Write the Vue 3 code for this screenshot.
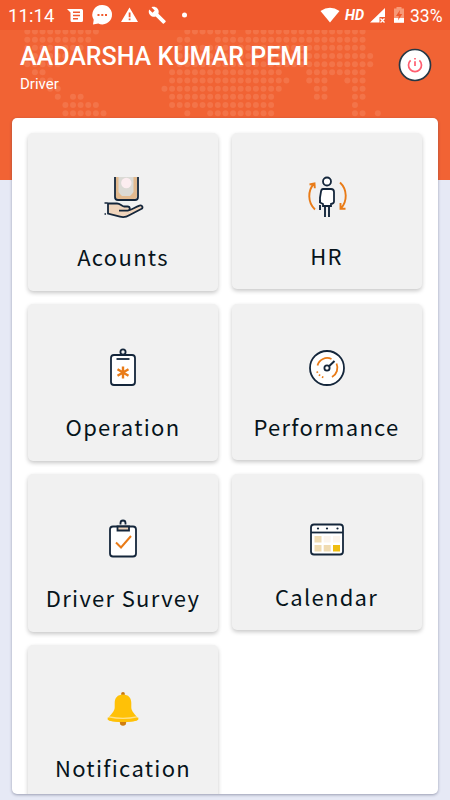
<template>
  <div class="screen">
    <header class="header">
      <svg class="dots" width="450" height="180" viewBox="0 0 450 180">
        <circle v-for="d in dots" :key="d.id" :cx="d.x" :cy="d.y" r="3" />
      </svg>
      <div class="status">
        <span class="time">11:14</span>
        <svg class="status-left" width="124" height="30" viewBox="66 0 124 30" fill="#fff">
          <path fill-rule="evenodd" d="M67 9h14.500q1.500 0 1.500 1.500v10q0 1.500-1.500 1.500H72q-1.500 0-1.500-1.500V12.500zM73 11.500v1.500h7v-1.500zM73 14.700v1.500h7v-1.500zM73 18v1.500h5v-1.500z" />
          <path fill-rule="evenodd" d="M102 5a9.700 9.700 0 1 1-3.700 18.500L93 24.500l.7-4.800A9.700 9.700 0 0 1 102 5zM97.500 14v2h2v-2zM101.300 14v2h2v-2zM105 14v2h2v-2z" />
          <path fill-rule="evenodd" d="M129.500 7.500L138 22h-17zM128.700 12.500v4.800h1.800v-4.800zM128.700 18.500v1.800h1.800v-1.800z" />
          <path d="M165.500 20.800l-7.100-7.100c.7-1.800.3-3.900-1.200-5.400-1.500-1.500-3.800-1.900-5.700-1l3.200 3.200-2.200 2.200-3.300-3.200c-.9 1.900-.5 4.300 1.100 5.800 1.500 1.500 3.600 1.900 5.400 1.200l7.100 7.100c.3.300.8.300 1.100 0l1.600-1.700c.4-.3.400-.8 0-1.100z" />
          <circle cx="184.500" cy="15" r="2.500" />
        </svg>
        <svg class="status-wifi" width="22" height="30" viewBox="0 0 22 30" fill="#fff"><path d="M.5 11Q10 4.300 19.500 11L10 22.500z" /></svg>
        <span class="hd">HD</span>
        <svg class="status-signal" width="36" height="30" viewBox="369 0 36 30" fill="#fff">
          <path d="M385 8v9h-5.500v5.500H370z" />
          <path d="M380.500 18.500l4 4M384.500 18.500l-4 4" fill="none" stroke="#fff" stroke-width="1.300" />
          <path fill="#f79a78" d="M396.500 7h5v1.500h2.500V19h-10V8.500h2.500z" />
          <path d="M394 18h10v4.800h-10z" />
          <path fill="#f05a2d" d="M400 10l-4 6h2.800l-.8 4.500 4.200-6.500h-2.700z" />
        </svg>
        <span class="battery">33%</span>
      </div>
      <div class="profile">
        <div class="who">
          <h1>AADARSHA KUMAR PEMI</h1>
          <p>Driver</p>
        </div>
        <button class="power">
          <svg width="34" height="34" viewBox="0 0 34 34" fill="none">
            <circle cx="17" cy="17" r="15.500" fill="#fff" stroke="#263846" stroke-width="1.700" />
            <path d="M12.600 12.300a6.500 6.500 0 1 0 8.800 0" stroke="#ff5e70" stroke-width="1.700" />
            <path d="M17 13.200v4.800M17 10v1.600" stroke="#ff5e70" stroke-width="1.700" />
          </svg>
        </button>
      </div>
    </header>

    <main class="panel">
      <div class="grid">
        <div v-for="(c, i) in cards" :key="c.label" class="card" :class="{ short: i % 2 }">
          <svg class="icon" width="50" height="50" viewBox="0 0 50 50" fill="none" stroke="#14263b" stroke-width="1.800">
            <g v-if="c.icon === 'accounts'">
              <path fill="#e3ba8f" stroke="none" d="M17 4h22v19q0 3-3 3H20q-3 0-3-3z" />
              <path fill="#dbdad5" stroke="none" d="M20.500 4h15v15l-1.500 2-2 2h-8l-2-2-1.500-2z" />
              <circle cx="28.300" cy="10" r="5.200" fill="#fcedf0" stroke="none" />
              <path d="M17 4v20q0 3 3 3h17q3 0 3-3V4" />
              <path fill="#f0d5bd" d="M10 30.500h9c3 0 4 2 7 3h3.500c3 0 3 4 0 4.200H21h8.500c3-.2 7-3.200 12-5.100 3-.8 4 2.200 1.700 3.400l-12 6.300c-3 1.900-6 2.200-9.200 1.400L10 40.500z" />
              <path d="M6.500 30h3M6.500 41h1.500" stroke-width="1.600" />
            </g>
            <g v-else-if="c.icon === 'hr'">
              <circle cx="25" cy="9.500" r="4" fill="#fff" />
              <path fill="#fff" d="M21 17h8q3 0 3 3v9.500q0 2-3 2.500v2h-8v-2l-3-1.500v-5l1-6q.5-2.500 2-2.500z" />
              <path d="M23 34v11M27 34v11M18 28v3M18 33v5" stroke-width="1.900" />
              <path d="M13 37.500c-7.500-7-7.500-19-.8-26M7.500 12.500l5-1 .3 4.800M38 10.500c7.500 7 7.500 19 .8 26M38.500 31v5.800h5" stroke="#e97b17" stroke-width="1.900" />
            </g>
            <g v-else-if="c.icon === 'operation'">
              <circle cx="25" cy="9" r="2.600" />
              <rect x="13" y="12" width="24" height="30" rx="3" fill="#fff" />
              <path d="M18.500 16H31.500" />
              <path d="M25 23.500V35.500M19.500 26.300L30.500 32.700M30.500 26.300L19.500 32.700" stroke="#e97b17" stroke-width="2.400" />
            </g>
            <g v-else-if="c.icon === 'performance'">
              <circle cx="25" cy="25" r="17" fill="#fff" />
              <path d="M15.500 22.500A10 10 0 0 1 29.500 16M34.500 20.500A10.500 10.500 0 0 1 30 34" stroke="#e97b17" />
              <path d="M15 28.500A10.500 10.500 0 0 0 21.500 34.500" stroke="#e97b17" stroke-dasharray="1.500 2.200" />
              <circle cx="25" cy="25" r="2.600" />
              <path d="M27 23.200L32.500 18" stroke-width="2" />
            </g>
            <g v-else-if="c.icon === 'survey'">
              <path d="M22.500 10.500V9a2.500 2.500 0 0 1 5 0v1.500" />
              <rect x="12" y="12.500" width="26" height="30" rx="3" fill="#fff" />
              <path fill="#ecd3bb" d="M19.500 12.500h11.500v4H19.500z" />
              <path d="M18 28.500l5 5L33 22" stroke="#e97b17" stroke-width="2" />
            </g>
            <g v-else-if="c.icon === 'calendar'">
              <rect x="9" y="11.500" width="32" height="30" rx="3" fill="#fff" />
              <path d="M9 19.500h32" />
              <g fill="#14263b" stroke="none"><circle cx="16" cy="15.500" r="1.100" /><circle cx="25" cy="15.500" r="1.100" /><circle cx="35.500" cy="15.500" r="1.100" /></g>
              <g stroke="none">
                <path fill="#f0dbb1" d="M12.500 23h7v6.500h-7zM12.500 32h7v6.500h-7zM21.700 32h7v6.500h-7z" />
                <path fill="#fcf5ed" d="M21.700 23h7v6.500h-7zM31 23h7v6.500h-7z" />
                <path fill="#efbd10" d="M31 32h7v6.500h-7z" />
              </g>
            </g>
            <g v-else stroke="none">
              <ellipse cx="25" cy="10" rx="1.900" ry="1.900" fill="#c87810" />
              <path fill="#cf7d10" d="M21.500 36.500h7l-.7 4q-2.800 2.500-5.600 0z" />
              <path fill="#ffc107" d="M25 10.500c-5.500 0-8.300 3.500-8.300 8.500v4.500c0 4-4.200 7-7 11.500-.5 4 30.600 4 30.600 0-2.800-4.500-7-7.500-7-11.500V19c0-5-2.800-8.500-8.300-8.500z" />
              <path fill="#ffc107" d="M9.700 33.500q15.300 3.500 30.600 0v1.800q-1 2.700-15.300 2.700T9.700 35.300z" />
              <path d="M11 32.800q14 3 28 0" fill="none" stroke="#ffe18a" stroke-width="1.300" />
            </g>
          </svg>
          <span class="label" :style="{ letterSpacing: c.space + 'px' }">{{ c.label }}</span>
        </div>
      </div>
    </main>
  </div>
</template>

<script setup>
const cards = [
  { label: 'Acounts', icon: 'accounts', space: 1.3 },
  { label: 'HR', icon: 'hr', space: 1.3 },
  { label: 'Operation', icon: 'operation', space: 1.3 },
  { label: 'Performance', icon: 'performance', space: 1.3 },
  { label: 'Driver Survey', icon: 'survey', space: 1.3 },
  { label: 'Calendar', icon: 'calendar', space: 1.3 },
  { label: 'Notification', icon: 'bell', space: 1.3 },
]

// world map dots: column ranges for each row
const rows = [
  [[0, 9], [21, 27], [29, 44]],
  [[0, 8], [20, 21], [25, 44]],
  [[0, 7], [20, 44]],
  [[0, 5], [20, 45]],
  [[0, 4], [20, 45]],
  [[1, 2], [19, 33], [37, 44]],
  [[2, 3], [19, 34], [37, 39], [42, 44]],
  [[3, 4], [18, 33], [38, 39], [43, 44]],
  [[4, 4], [6, 7], [19, 32], [38, 39], [43, 44]],
  [[5, 9], [19, 32], [43, 43]],
  [[5, 10], [21, 21], [24, 32], [43, 44], [46, 46]],
]
const dots = []
rows.forEach((ranges, r) => {
  for (const [a, b] of ranges) {
    for (let k = a; k <= b; k++) dots.push({ id: r + '-' + k, x: 27.3 + k * 7.62, y: 31.5 + r * 8.17 })
  }
})
</script>

<style>
body{background:#e6e9f5}
</style>

<style scoped>
.screen{position:relative;height:800px;overflow:hidden;background:#e6e9f5;font-family:Roboto,sans-serif;box-sizing:border-box}
.header{position:relative;height:180px;background:#f16334;color:#fff}
.dots{position:absolute;left:0;top:0;fill:#f37449}
.status{position:relative;height:30px;display:flex;align-items:center;background:#f05a2d}
.time{width:58px;padding-left:8px;font-size:18.5px;line-height:30px;letter-spacing:.1px;padding-top:1px}
.status-left{flex-shrink:0}
.status-wifi{margin-left:130px;flex-shrink:0}
.hd{width:27px;font-size:14.5px;font-weight:700;font-style:italic;padding-left:3px;flex-shrink:0;box-sizing:border-box}
.status-signal{flex-shrink:0}
.battery{font-size:17.5px;padding:1px 0 0 5px}
.profile{position:relative;display:flex;justify-content:space-between;padding:12px 18px 0 20px}
h1{margin:0;font-size:25px;line-height:30px;font-weight:500;white-space:nowrap}
p{margin:3px 0 0;font-size:15px;line-height:18px}
.power{margin:6px 0 0;padding:0;border:0;background:none;width:34px;height:34px}
.power svg{display:block}
.panel{position:absolute;left:12px;top:118px;width:426px;height:676px;overflow:hidden;border-radius:5px;background:#fff;box-shadow:0 1px 3px rgba(40,45,80,.4)}
.grid{display:grid;grid-template-columns:190px 190px;grid-auto-rows:157.5px;gap:13px 13.5px;padding:15px 16px}
.card{display:flex;flex-direction:column;align-items:center;height:157.5px;padding-top:39.500px;box-sizing:border-box;border-radius:5px;background:#f1f1f1;box-shadow:0 2px 4px rgba(0,0,0,.22)}
.card.short{height:156px;padding-top:39px}
.icon{flex-shrink:0}
.label{margin-top:16px;font-family:"Noto Sans CJK SC",sans-serif;font-size:22px;line-height:34px;color:#07141b;white-space:nowrap}
</style>
